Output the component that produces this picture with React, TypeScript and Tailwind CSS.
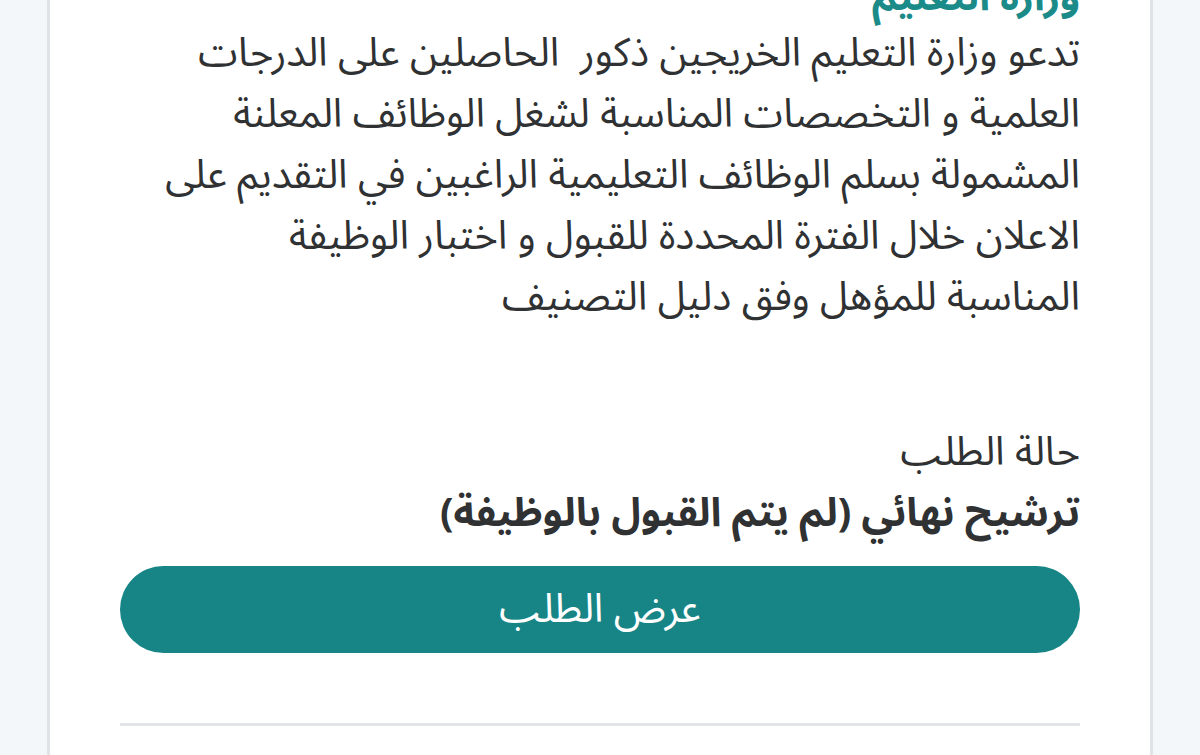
import React from 'react';

const lines = [
  'تدعو وزارة التعليم الخريجين ذكور  الحاصلين على الدرجات',
  'العلمية و التخصصات المناسبة لشغل الوظائف المعلنة',
  'المشمولة بسلم الوظائف التعليمية الراغبين في التقديم على',
  'الاعلان خلال الفترة المحددة للقبول و اختبار الوظيفة',
  'المناسبة للمؤهل وفق دليل التصنيف',
];

const App: React.FC = () => {
  return (
    <div
      className="w-[1200px] h-[755px] overflow-hidden bg-[#f3f7fa] flex justify-center"
      style={{ fontFamily: '"Noto Sans Arabic", "Noto Sans", "DejaVu Sans", sans-serif' }}
    >
      <div dir="rtl" className="w-[1106px] h-full bg-white border-x-[3px] border-[#dfe3e7] px-[70px]">
        <h2 className="-mt-[27px] text-[40px] leading-[50px] font-bold text-[#1b8b89]">وزارة التعليم</h2>
        <div className="text-[40px] leading-[61px] text-[#2f3133]">
          {lines.map((l, i) => (
            <div key={i} className="whitespace-pre">{l}</div>
          ))}
        </div>
        <div className="mt-[94px] text-[40px] leading-[61px] text-[#2f3133]">حالة الطلب</div>
        <div className="text-[40px] leading-[61px] font-bold text-[#2f3133]">ترشيح نهائي (لم يتم القبول بالوظيفة)</div>
        <button className="mt-[22px] w-full h-[87px] rounded-full bg-[#178586] text-white text-[40px]">
          عرض الطلب
        </button>
        <div className="mt-[70px] h-[3px] bg-[#e2e4e8]" />
      </div>
    </div>
  );
};

export default App;
